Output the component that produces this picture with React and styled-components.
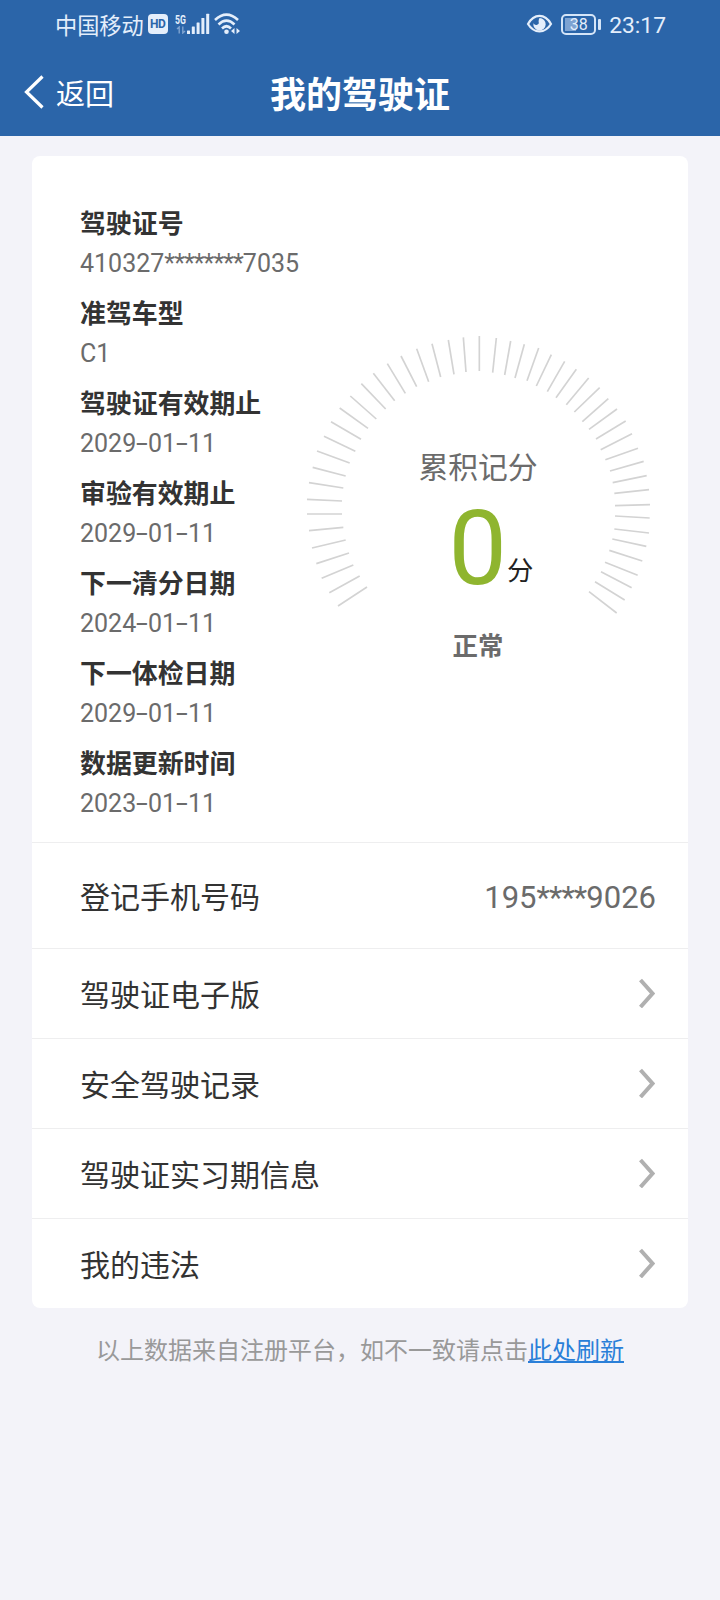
import React from 'react';
import styled, { createGlobalStyle } from 'styled-components';

const GlobalStyle = createGlobalStyle`
  body {
    margin: 0;
    background-color: #f3f3f9;
    font-family: Roboto, 'Noto Sans CJK SC', sans-serif;
  }
`;

const Page = styled.div`
  display: flex;
  flex-direction: column;
  min-height: 1600px;
  background-color: #f3f3f9;
`;

const Header = styled.header`
  height: 136px;
  background-color: #2b65a9;
  color: #ffffff;
`;

const StatusBar = styled.div`
  display: flex;
  flex-direction: row;
  justify-content: space-between;
  height: 48px;
  padding: 0 54px 0 55px;
  color: #e4eefb;
`;

const StatusGroup = styled.div`
  display: flex;
  flex-direction: row;
  align-items: center;
`;

const Carrier = styled.span`
  padding-top: 3px;
  font-size: 22.2px;
  line-height: 48px;
  margin-right: 4px;
`;

const HdBadge = styled.span`
  width: 20px;
  height: 20px;
  border-radius: 4px;
  background-color: #e4eefb;
  color: #2b65a9;
  font-size: 12px;
  font-weight: 700;
  line-height: 21px;
  text-align: center;
  letter-spacing: -0.5px;
`;

const SignalColumn = styled.div`
  display: flex;
  flex-direction: column;
  align-items: center;
  width: 12px;
  margin-left: 7px;
`;

const NetworkType = styled.span`
  font-size: 12px;
  font-weight: 700;
  line-height: 12px;
  transform: scaleX(0.72);
`;

const Battery = styled.div`
  display: flex;
  flex-direction: row;
  align-items: center;
  margin: 0 8px 0 8px;
`;

const BatteryBody = styled.div`
  box-sizing: border-box;
  width: 35px;
  height: 21px;
  border: 2px solid #d5e5f8;
  border-radius: 5px;
  background: linear-gradient(to right, #7ea3d2 11px, transparent 11px) 2px 2px / 27px 13px no-repeat;
  font-size: 16px;
  line-height: 18px;
  text-align: center;
`;

const BatteryTip = styled.span`
  width: 3px;
  height: 11px;
  margin-left: 2px;
  border-radius: 1px;
  background-color: #d5e5f8;
`;

const Clock = styled.span`
  padding-top: 4px;
  font-size: 22.8px;
  line-height: 48px;
`;

const NavBar = styled.div`
  display: grid;
  grid-template-columns: 1fr auto 1fr;
  align-items: center;
  height: 88px;
  padding: 0 24px;
`;

const BackButton = styled.button`
  display: flex;
  align-items: center;
  gap: 12px;
  padding: 0;
  border: none;
  background-color: transparent;
  color: #ffffff;
  font-family: inherit;
  font-size: 29px;
  line-height: 44px;
  cursor: pointer;
`;

const BackText = styled.span`
  padding-top: 5px;
`;

const Title = styled.h1`
  margin: 0;
  padding-top: 7px;
  font-size: 36px;
  font-weight: 700;
  line-height: 48px;
`;

const Card = styled.main`
  margin: 20px 32px 0;
  border-radius: 8px;
  background-color: #ffffff;
`;

const Summary = styled.section`
  display: flex;
  flex-direction: row;
  height: 638px;
  padding: 48px 0 0 48px;
`;

const InfoList = styled.dl`
  width: 220px;
  margin: 0;
  flex-shrink: 0;
`;

const InfoLabel = styled.dt`
  color: #333333;
  font-size: 25.9px;
  font-weight: 700;
  line-height: 40px;
`;

const InfoValue = styled.dd`
  margin: 0 0 10px;
  color: #6b6b6b;
  font-size: 25px;
  line-height: 40px;
  white-space: nowrap;
`;

const Dash = styled.span`
  display: inline-block;
  width: 11.8px;
  text-align: center;
  transform: scaleX(1.7);
`;

const Stars = styled.span`
  letter-spacing: ${(props) => props.$spacing};
`;

const Gauge = styled.div`
  display: grid;
  width: 360px;
  height: 360px;
  margin-top: 116px;
  flex-shrink: 0;

  > * {
    grid-area: 1 / 1;
  }
`;

const GaugeText = styled.div`
  display: flex;
  flex-direction: column;
  align-items: center;
  padding: 126px 4px 0 0;
`;

const GaugeTitle = styled.span`
  color: #6b6b6b;
  font-size: 29.8px;
  line-height: 44px;
`;

const Score = styled.div`
  display: flex;
  align-items: baseline;
  height: 120px;
  margin: 0 -26px 0 0;
  color: #8fb52f;
  font-size: 104px;
  line-height: 118px;
`;

const ScoreUnit = styled.span`
  color: #222222;
  font-size: 26.4px;
  line-height: 40px;
  transform: translateY(-4px);
`;

const GaugeState = styled.span`
  margin-top: 16px;
  color: #6b6b6b;
  font-size: 25.4px;
  font-weight: 700;
  line-height: 40px;
`;

const Row = styled.div`
  box-sizing: border-box;
  display: flex;
  justify-content: space-between;
  align-items: center;
  height: ${(props) => props.$height || 90}px;
  padding: 0 33px 2px 48px;
  border-top: 1px solid #eeeeef;
  color: #333333;
  font-size: 30px;
`;

const PhoneNumber = styled.span`
  padding-top: 5px;
  margin-right: -1px;
  color: #6b6b6b;
  font-size: 31px;
`;

const Footer = styled.footer`
  margin-top: 23px;
  color: #999999;
  font-size: 24px;
  line-height: 40px;
  text-align: center;
`;

const RefreshLink = styled.a`
  color: #2a7fd8;
  text-decoration: underline;
`;

const info = [
  ['驾驶证号', '410327********7035'],
  ['准驾车型', 'C1'],
  ['驾驶证有效期止', '2029-01-11'],
  ['审验有效期止', '2029-01-11'],
  ['下一清分日期', '2024-01-11'],
  ['下一体检日期', '2029-01-11'],
  ['数据更新时间', '2023-01-11'],
];

const links = ['驾驶证电子版', '安全驾驶记录', '驾驶证实习期信息', '我的违法'];

// outer x, outer y, inner x, inner y
const ticks = [
  [114, 858, 201, 801], [88, 818, 179, 768], [65, 775, 160, 735], [49, 731, 147, 699],
  [36, 684, 137, 660], [27, 632, 130, 622], [21, 582, 126, 582], [21, 538, 126, 543],
  [27, 488, 130, 504], [38, 442, 137, 468], [51, 393, 149, 429], [72, 349, 166, 394],
  [93, 305, 183, 358], [119, 264, 204, 325], [151, 228, 229, 297], [184, 191, 257, 267],
  [220, 160, 284, 242], [262, 131, 316, 220], [303, 108, 350, 200], [350, 86, 386, 185],
  [396, 71, 422, 171], [445, 60, 462, 163], [490, 52, 498, 156], [538, 48, 538, 153],
  [589, 54, 578, 158], [632, 63, 614, 165], [673, 73, 645, 174], [716, 84, 681, 182],
  [754, 104, 709, 198], [794, 124, 742, 215], [829, 148, 768, 233], [866, 174, 799, 254],
  [899, 203, 823, 276], [925, 236, 847, 305], [951, 267, 867, 328], [977, 303, 888, 357],
  [996, 341, 902, 389], [1014, 385, 916, 419], [1031, 424, 930, 453], [1040, 467, 938, 488],
  [1047, 509, 943, 520], [1050, 554, 945, 557], [1049, 594, 945, 588], [1047, 639, 943, 627],
  [1039, 679, 937, 657], [1027, 723, 928, 691], [1013, 766, 915, 727], [995, 803, 903, 755],
  [974, 840, 885, 785], [950, 879, 867, 815],
];

const DataArrows = () => (
  <svg width="10" height="8" viewBox="0 0 10 8" fill="none" stroke="#7fa3d0" strokeWidth="1.4">
    <path d="M1 3l2.2-2v6.5M9 5L6.8 7V.5" />
  </svg>
);

const SignalBars = () => (
  <svg width="23" height="22" viewBox="0 0 23 22" fill="#e4eefb">
    <rect x="0" y="17.5" width="3" height="3.5" rx="0.5" />
    <rect x="4.8" y="13.5" width="3" height="7.5" rx="0.5" />
    <rect x="9.6" y="9.5" width="3" height="11.5" rx="0.5" />
    <rect x="14.4" y="5" width="3" height="16" rx="0.5" />
    <rect x="19.2" y="0.8" width="3" height="20.2" rx="0.5" />
  </svg>
);

const WifiSvg = styled.svg`
  margin-left: 4px;
`;

const WifiIcon = () => (
  <WifiSvg width="27" height="22" viewBox="0 0 27 22" fill="none" stroke="#e4eefb" strokeWidth="2.6">
    <path d="M1 7Q12.500 -3.600 24 7M4.500 11.500Q12.500 3.800 20.500 11.500M8 15.500Q12.500 11 17 15.500" />
    <circle cx="12.500" cy="18.800" r="2.300" fill="#e4eefb" stroke="none" />
    <path d="M20.500 15v6l-3.500-3zM22.500 15v6l3.500-3z" fill="#e4eefb" stroke="none" />
  </WifiSvg>
);

const EyeIcon = () => (
  <svg width="27" height="20" viewBox="0 0 27 20" fill="none">
    <path d="M2 10C8 -.800 19 -.800 25 10C19 19.800 8 19.800 2 10z" stroke="#e4eefb" strokeWidth="2.200" />
    <path d="M13.500 4a6.200 6.200 0 1 1-6.100 5.200q1.400 2.400 3.700 1.600t1.500-3.100q-.1-2 .9-3.700z" fill="#e4eefb" />
  </svg>
);

const BackIcon = () => (
  <svg width="20" height="34" viewBox="0 0 20 34" fill="none" stroke="#ffffff" strokeWidth="3.200">
    <path d="M18.500 1.500L2.500 17l16 15.500" />
  </svg>
);

const ChevronIcon = () => (
  <svg width="17" height="30" viewBox="0 -1 17 30" fill="none" stroke="#b0b0b0" strokeWidth="4">
    <path d="M2.500 1L14.500 14.500 2.500 28" />
  </svg>
);

const InfoText = ({ text }) => text.split(/(-|\*+)/).map((part, i) => {
  if (part === '-') return <Dash key={i}>-</Dash>;
  if (part[0] === '*') return <Stars key={i} $spacing="-0.95px">{part}</Stars>;
  return part;
});

export default function App() {
  return (
    <Page>
      <GlobalStyle />
      <Header>
        <StatusBar>
          <StatusGroup>
            <Carrier>中国移动</Carrier>
            <HdBadge>HD</HdBadge>
            <SignalColumn>
              <NetworkType>5G</NetworkType>
              <DataArrows />
            </SignalColumn>
            <SignalBars />
            <WifiIcon />
          </StatusGroup>
          <StatusGroup>
            <EyeIcon />
            <Battery>
              <BatteryBody>38</BatteryBody>
              <BatteryTip />
            </Battery>
            <Clock>23:17</Clock>
          </StatusGroup>
        </StatusBar>
        <NavBar>
          <BackButton>
            <BackIcon />
            <BackText>返回</BackText>
          </BackButton>
          <Title>我的驾驶证</Title>
        </NavBar>
      </Header>

      <Card>
        <Summary>
          <InfoList>
            {info.map(([label, value]) => (
              <React.Fragment key={label}>
                <InfoLabel>{label}</InfoLabel>
                <InfoValue><InfoText text={value} /></InfoValue>
              </React.Fragment>
            ))}
          </InfoList>
          <Gauge>
            <svg width="360" height="360" viewBox="0 0 1080 1080" stroke="#d3d3d3" strokeWidth="5">
              {ticks.map(([x1, y1, x2, y2]) => (
                <line key={`${x1}-${y1}`} x1={x1} y1={y1} x2={x2} y2={y2} />
              ))}
            </svg>
            <GaugeText>
              <GaugeTitle>累积记分</GaugeTitle>
              <Score>
                0
                <ScoreUnit>分</ScoreUnit>
              </Score>
              <GaugeState>正常</GaugeState>
            </GaugeText>
          </Gauge>
        </Summary>
        <Row $height={106}>
          登记手机号码
          <PhoneNumber>195<Stars $spacing="-0.9px">****</Stars>9026</PhoneNumber>
        </Row>
        {links.map((link) => (
          <Row key={link}>
            {link}
            <ChevronIcon />
          </Row>
        ))}
      </Card>

      <Footer>
        以上数据来自注册平台，如不一致请点击<RefreshLink>此处刷新</RefreshLink>
      </Footer>
    </Page>
  );
}
